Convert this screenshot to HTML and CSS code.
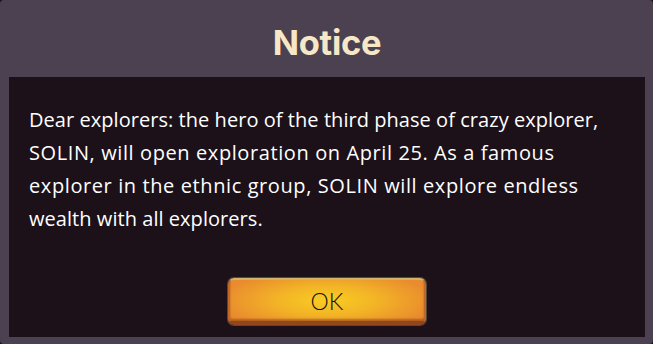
FILE: index.html
```
<!DOCTYPE html>
<html>
<head>
<meta charset="utf-8">
<link rel="stylesheet" href="styles.css">
</head>
<body>
<div class="dialog">
  <h1 class="title">Notice</h1>
  <div class="panel">
    <p class="message">Dear explorers: the hero of the third phase of crazy explorer,<br><span class="wide">SOLIN, will open exploration on April 25. As a famous</span><br><span class="wide">explorer in the ethnic group, SOLIN will explore endless</span><br>wealth with all explorers.</p>
    <div class="actions">
      <button class="ok">OK</button>
    </div>
  </div>
</div>
</body>
</html>
```
FILE: styles.css
```
html, body {
  margin: 0;
  padding: 0;
  background: #1b1118;
}
.dialog {
  width: 653px;
  height: 344px;
  box-sizing: border-box;
  background: #4c4150;
  border-radius: 4px;
  padding: 0 8px 7px 9px;
  display: flex;
  flex-direction: column;
}
.title {
  margin: 0;
  height: 77px;
  display: flex;
  align-items: center;
  justify-content: center;
  padding-top: 8px;
  box-sizing: border-box;
  font-family: "Inter", "DejaVu Sans", sans-serif;
  font-weight: 700;
  font-size: 34.5px;
  color: #f6e8c6;
  letter-spacing: -0.3px;
}
.panel {
  flex: 1;
  background: #1c1119;
  display: flex;
  flex-direction: column;
  padding: 26px 10px 12px 20px;
}
.message {
  margin: 0;
  font-family: "Open Sans", "DejaVu Sans", sans-serif;
  font-size: 20px;
  line-height: 33px;
  color: #ffffff;
  letter-spacing: 0.05px;
  white-space: nowrap;
}
.wide {
  letter-spacing: 0.6px;
}
.actions {
  margin-top: auto;
  display: flex;
  justify-content: center;
  margin-left: -11px;
  margin-right: -1px;
}
.ok {
  width: 198px;
  height: 47px;
  border: 2px solid #c0682a;
  border-bottom: 4px solid #93461c;
  border-top: 2px solid #cfb46a;
  border-radius: 6px;
  background: radial-gradient(ellipse 55% 75% at 50% 50%, #f9cd21 0%, #f3b526 45%, #e98b2e 100%);
  box-shadow: 0 0 0 1px #55463e, inset 0 -2px 2px rgba(120, 50, 20, 0.5);
  font-family: "Lato", "DejaVu Sans", sans-serif;
  font-weight: 300;
  font-size: 23px;
  color: #111;
  padding: 0;
}
```
